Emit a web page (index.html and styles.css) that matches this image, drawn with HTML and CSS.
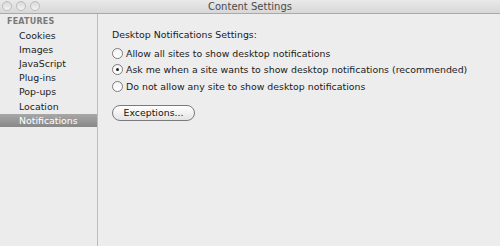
FILE: index.html
```html
<!DOCTYPE html>
<html>
<head>
    <meta charset="UTF-8" />
    <title>Content Settings</title>
    <link rel="stylesheet" href="styles.css">
</head>
<body>
    <div class="win">
        <div class="titlebar">
            <div class="lights">
                <span></span><span></span><span></span>
            </div>
            <div class="title">Content Settings</div>
        </div>
        <div class="main">
            <ul class="side">
                <li class="head">FEATURES</li>
                <li>Cookies</li>
                <li>Images</li>
                <li>JavaScript</li>
                <li>Plug-ins</li>
                <li>Pop-ups</li>
                <li>Location</li>
                <li class="active">Notifications</li>
            </ul>
            <div class="pane">
                <p class="label">Desktop Notifications Settings:</p>
                <div class="opts">
                    <label class="opt"><i class="radio"></i>Allow all sites to show desktop notifications</label>
                    <label class="opt"><i class="radio on"></i>Ask me when a site wants to show desktop notifications (recommended)</label>
                    <label class="opt"><i class="radio"></i>Do not allow any site to show desktop notifications</label>
                </div>
                <a href="javascript:;" class="btn">Exceptions...</a>
            </div>
        </div>
    </div>
</body>
</html>
```

FILE: styles.css
```css
*{
    margin: 0;
    padding: 0;
    list-style: none;
    box-sizing: border-box;
}
body{
    width: 500px;
    height: 246px;
    overflow: hidden;
    font-family: "DejaVu Sans", sans-serif;
    font-size: 9.4px;
    color: #1a1a1a;
    background: #ededed;
}
.win{
    display: flex;
    flex-direction: column;
    height: 246px;
}
.titlebar{
    position: relative;
    height: 14px;
    background: linear-gradient(#e9e9e9, #d7d7d7);
    border-bottom: 1px solid #a9a9a9;
    display: flex;
    align-items: center;
    justify-content: center;
}
.lights{
    position: absolute;
    left: 2px;
    top: 1px;
    display: flex;
    gap: 4px;
}
.lights span{
    width: 10px;
    height: 10px;
    border-radius: 50%;
    background: linear-gradient(#d8d8d8, #f4f4f4);
    border: 1px solid #bcbcbc;
}
.title{
    font-size: 10px;
    color: #4a4a4a;
    line-height: 12px;
}
.main{
    flex: 1;
    display: flex;
}
.side{
    width: 98px;
    background: #ececec;
    border-right: 1px solid #bdbdbd;
    padding-top: 1px;
}
.side li{
    height: 14.2px;
    line-height: 14px;
    padding-left: 19px;
    color: #222;
}
.side .head{
    height: 13.6px;
    padding-left: 7px;
    font-size: 8px;
    font-weight: bold;
    color: #7a7a7a;
    letter-spacing: .2px;
}
.side .active{
    height: 13px;
    line-height: 13px;
    color: #fff;
    background: linear-gradient(#a8a8a8, #878787);
}
.pane{
    flex: 1;
    padding: 14px 0 0 14px;
    background: #ededed;
}
.label{
    line-height: 14px;
    margin-bottom: 3px;
}
.opts{
    display: flex;
    flex-direction: column;
}
.opt{
    display: flex;
    align-items: center;
    height: 16.5px;
    gap: 3px;
}
.radio{
    width: 11px;
    height: 11px;
    border-radius: 50%;
    border: 1px solid #7c7c7c;
    background: linear-gradient(#f4f4f4, #fff);
    display: flex;
    align-items: center;
    justify-content: center;
}
.radio.on:after{
    content: "";
    width: 3px;
    height: 3px;
    border-radius: 50%;
    background: #222;
}
.btn{
    display: inline-block;
    margin-top: 10px;
    width: 83px;
    height: 16px;
    line-height: 14px;
    text-align: center;
    border: 1px solid #7a7a7a;
    border-radius: 8px;
    background: linear-gradient(#fff, #e4e4e4);
    color: #111;
    text-decoration: none;
}
```
